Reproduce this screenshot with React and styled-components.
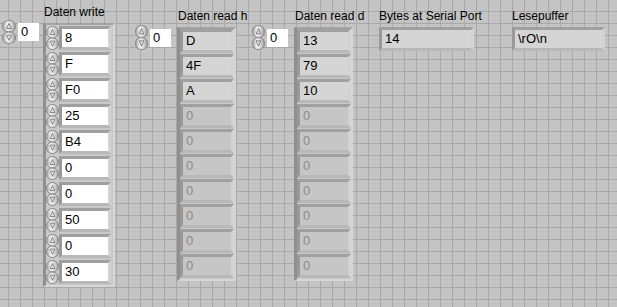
import React from "react"
import styled, { createGlobalStyle } from "styled-components"

const GlobalStyle = createGlobalStyle`
  html, body {
    margin: 0;
    padding: 0;
  }
  body {
    width: 617px;
    height: 307px;
    overflow: hidden;
  }
`

const Panel = styled.div`
  width: 617px;
  height: 307px;
  box-sizing: border-box;
  padding-left: 2px;
  display: flex;
  align-items: flex-start;
  background-color: #c4c4c4;
  background-image:
    linear-gradient(to right, #a8a8a8 1px, transparent 1px),
    linear-gradient(to bottom, #a8a8a8 1px, transparent 1px);
  background-size: 12px 12px;
  background-position: 8px 11px;
  font-family: "Liberation Sans", Arial, sans-serif;
  color: #000;
`

const Group = styled.div`
  display: flex;
  align-items: flex-start;
  gap: ${(p) => p.$gap || 0}px;
  margin-left: ${(p) => p.$left || 0}px;
`

const Column = styled.div`
  display: flex;
  flex-direction: column;
  align-items: flex-start;
  padding-top: ${(p) => p.$top}px;
`

/* labels hang over their control without widening it */
const Label = styled.div`
  width: 0;
  height: 14px;
  line-height: 14px;
  font-size: 12px;
  padding-left: ${(p) => p.$indent ?? 1}px;
  margin-bottom: 4px;
  white-space: nowrap;
  overflow: visible;
`

const IndexControl = styled.div`
  display: flex;
  align-items: center;
  gap: 2px;
  margin-top: ${(p) => p.$top}px;
`

const IndexBox = styled.div`
  width: 21px;
  height: 18px;
  box-sizing: border-box;
  background: #fff;
  padding-left: 3px;
  font-size: 13px;
  line-height: 18px;
`

const ArrayFrame = styled.div`
  display: flex;
  flex-direction: column;
  gap: ${(p) => p.$pitch}px;
  padding: ${(p) => (p.$controls ? "1px 2px 1px 0" : "0 0 1px 0")};
  background: #c9c9c9;
  border-style: solid;
  border-width: 2px 2px 2px 3px;
  border-color: #a3a3a3 #d6d6d6 #d6d6d6 #8f8f8f;
`

const ElementRow = styled.div`
  display: flex;
  align-items: flex-start;
`

const ValueBox = styled.div`
  width: ${(p) => p.$width}px;
  height: 18px;
  border-style: solid;
  border-width: 3px;
  border-color: #a0a0a0 #d3d3d3 #b8b8b8 #999999;
  padding-left: 3px;
  box-sizing: content-box;
  font-size: 13px;
  line-height: 18px;
  white-space: nowrap;
  overflow: hidden;
  background: ${(p) =>
    p.$kind === "control" ? "#ffffff" : p.$kind === "disabled" ? "#c6c6c6" : "#d5d5d5"};
  color: ${(p) => (p.$kind === "disabled" ? "#8a8a8a" : "#000")};
`

const Spinner = ({ w = 13, h = 24 }) => (
  <svg width={w} height={h} viewBox="0 0 13 24" preserveAspectRatio="none" style={{ display: "block", flexShrink: 0 }}>
    <defs>
      <linearGradient id="spinFill" x1="0" y1="0" x2="1" y2="0">
        <stop offset="0" stopColor="#a2a2a2" />
        <stop offset="0.35" stopColor="#efefef" />
        <stop offset="0.7" stopColor="#d6d6d6" />
        <stop offset="1" stopColor="#939393" />
      </linearGradient>
    </defs>
    <rect x="0.5" y="0.5" width="12" height="11.5" rx="6" ry="5.5" fill="url(#spinFill)" stroke="#8a8a8a" />
    <rect x="0.5" y="12" width="12" height="11.5" rx="6" ry="5.5" fill="url(#spinFill)" stroke="#8a8a8a" />
    <path d="M6.5 3.5 L4.2 8.5 L8.8 8.5 Z" fill="#e4e4e4" stroke="#707070" strokeWidth="0.8" />
    <path d="M4.2 15.2 L8.8 15.2 L6.5 20.2 Z" fill="#e4e4e4" stroke="#707070" strokeWidth="0.8" />
  </svg>
)

const writeValues = ["8", "F", "F0", "25", "B4", "0", "0", "50", "0", "30"]
const readHex = ["D", "4F", "A", "0", "0", "0", "0", "0", "0", "0"]
const readDec = ["13", "79", "10", "0", "0", "0", "0", "0", "0", "0"]

const ReadArray = ({ label, values, left }) => (
  <Group $left={left} $gap={6}>
    <IndexControl $top={25}>
      <Spinner h={25} />
      <IndexBox>0</IndexBox>
    </IndexControl>
    <Column $top={9}>
      <Label>{label}</Label>
      <ArrayFrame $pitch={1}>
        {values.map((v, i) => (
          <ValueBox key={i} $width={45} $kind={i < 3 ? "indicator" : "disabled"}>
            {v}
          </ValueBox>
        ))}
      </ArrayFrame>
    </Column>
  </Group>
)

export default function App() {
  return (
    <>
      <GlobalStyle />
      <Panel>
        <Group $gap={4}>
          <IndexControl $top={20}>
            <Spinner w={14} />
            <IndexBox>0</IndexBox>
          </IndexControl>
          <Column $top={5}>
            <Label>Daten write</Label>
            <ArrayFrame $pitch={2} $controls>
              {writeValues.map((v, i) => (
                <ElementRow key={i}>
                  <Spinner />
                  <ValueBox $width={43} $kind="control">
                    {v}
                  </ValueBox>
                </ElementRow>
              ))}
            </ArrayFrame>
          </Column>
        </Group>

        <ReadArray label="Daten read h" values={readHex} left={20} />
        <ReadArray label="Daten read d" values={readDec} left={16} />

        <Group $left={26}>
          <Column $top={9}>
            <Label $indent={0}>Bytes at Serial Port</Label>
            <ValueBox $width={86} $kind="indicator">14</ValueBox>
          </Column>
        </Group>

        <Group $left={38}>
          <Column $top={9}>
            <Label $indent={0}>Lesepuffer</Label>
            <ValueBox $width={84} $kind="indicator">\rO\n</ValueBox>
          </Column>
        </Group>
      </Panel>
    </>
  )
}
